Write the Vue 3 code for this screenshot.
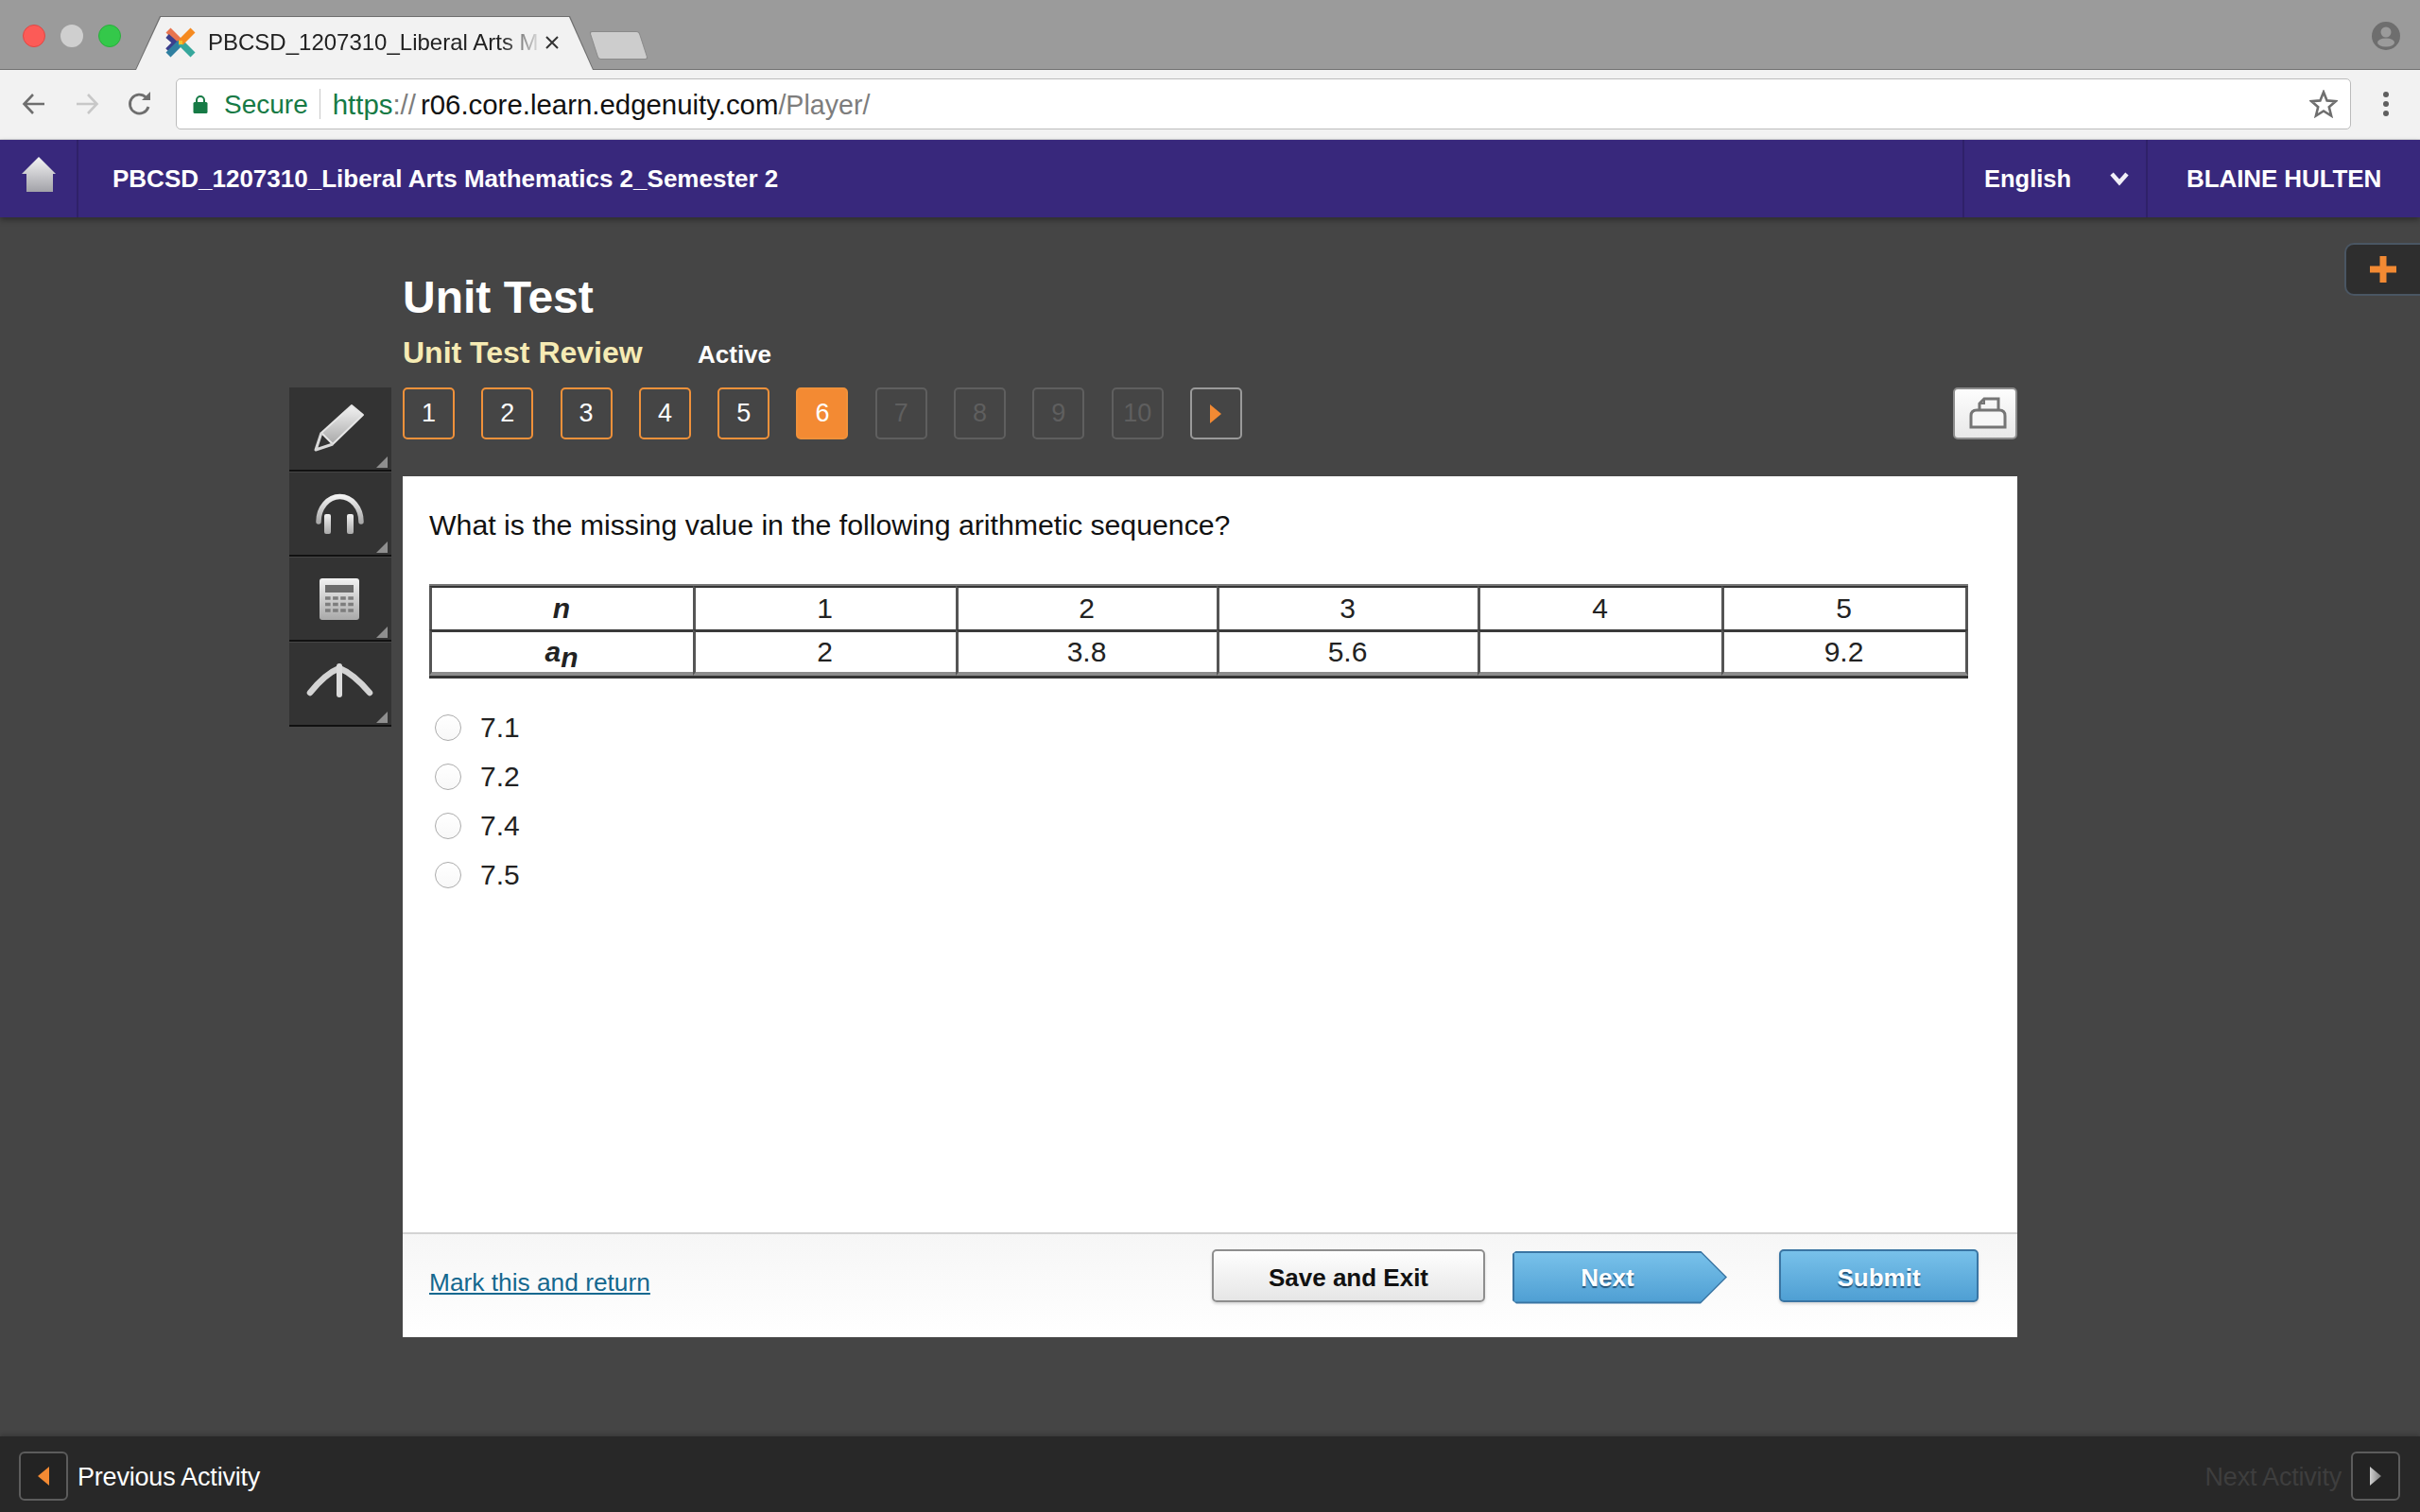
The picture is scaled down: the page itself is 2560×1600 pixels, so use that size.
<script setup>
const pages = [
  { n: '1', s: 'done' }, { n: '2', s: 'done' }, { n: '3', s: 'done' }, { n: '4', s: 'done' }, { n: '5', s: 'done' },
  { n: '6', s: 'current' }, { n: '7', s: 'locked' }, { n: '8', s: 'locked' }, { n: '9', s: 'locked' }, { n: '10', s: 'locked' }
]
const headRow = ['1', '2', '3', '4', '5']
const valueRow = ['2', '3.8', '5.6', '', '9.2']
const options = ['7.1', '7.2', '7.4', '7.5']
</script>

<template>
  <div class="page">
    <div class="tabstrip">
      <div class="lights">
        <span class="light red"></span><span class="light grey"></span><span class="light green"></span>
      </div>
      <div class="tab">
        <svg class="favicon" viewBox="0 0 32 32" width="32" height="32">
          <path d="M3 3 L16 16" stroke="#e8744e" stroke-width="7" fill="none" />
          <path d="M2 9 L10 16 L2 24" stroke="#3b3f8c" stroke-width="5" fill="none" />
          <path d="M3 29 L16 16" stroke="#2f7fa0" stroke-width="7" fill="none" />
          <path d="M29 29 L16 16" stroke="#36a79c" stroke-width="7" fill="none" />
          <path d="M29 3 L16 16" stroke="#f58a20" stroke-width="7" fill="none" />
          <path d="M14 14 L18 14 L18 18 L14 18 Z" fill="#f3c02b" />
        </svg>
        <span class="tab-title">PBCSD_1207310_Liberal Arts M</span>
        <svg class="tab-close" viewBox="0 0 14 14" width="14" height="14">
          <path d="M1 1 L13 13 M13 1 L1 13" stroke="#333" stroke-width="2" />
        </svg>
      </div>
      <div class="newtab"></div>
      <svg class="profile" viewBox="0 0 30 30" width="30" height="30">
        <circle cx="15" cy="15" r="15" fill="#6e6e6e" />
        <circle cx="15" cy="11" r="5.5" fill="#9b9b9b" />
        <ellipse cx="15" cy="22" rx="9" ry="4.5" fill="#9b9b9b" />
      </svg>
    </div>

    <div class="toolbar">
      <svg class="tb-icon" viewBox="0 0 28 28" width="28" height="28">
        <path d="M25 14 H4 M13 4 L3.5 14 L13 24" stroke="#6e6e6e" stroke-width="2.6" fill="none" />
      </svg>
      <svg class="tb-icon" viewBox="0 0 28 28" width="28" height="28">
        <path d="M3 14 H24 M15 4 L24.5 14 L15 24" stroke="#c8c8c8" stroke-width="2.6" fill="none" />
      </svg>
      <svg class="tb-icon" viewBox="0 0 28 28" width="28" height="28">
        <path d="M23 17 A10 10 0 1 1 20.5 7" stroke="#6e6e6e" stroke-width="2.8" fill="none" />
        <path d="M16 10 H25 V1 Z" fill="#6e6e6e" />
      </svg>
      <div class="omnibox">
        <svg class="lock" viewBox="0 0 16 20" width="16" height="20">
          <path d="M4 9 V6 A4 4 0 0 1 12 6 V9" stroke="#167a45" stroke-width="2" fill="none" />
          <rect x="0.5" y="8" width="15" height="12" rx="1.5" fill="#167a45" />
        </svg>
        <span class="secure">Secure</span>
        <span class="omni-sep"></span>
        <span class="url"><span class="u-green">https</span><span class="u-grey">://</span><span class="u-dark">r06.core.learn.edgenuity.com</span><span class="u-grey u-path">/Player/</span></span>
        <svg class="star" viewBox="0 0 30 30" width="30" height="30">
          <path d="M15 2.5 L18.6 11.4 L28 12.1 L20.8 18.2 L23.1 27.5 L15 22.5 L6.9 27.5 L9.2 18.2 L2 12.1 L11.4 11.4 Z" stroke="#6e6e6e" stroke-width="2.6" fill="none" />
        </svg>
      </div>
      <div class="dots"><i></i><i></i><i></i></div>
    </div>

    <header class="nav">
      <div class="home">
        <svg viewBox="0 0 36 38" width="36" height="38">
          <defs>
            <linearGradient id="homeG" x1="0" y1="0" x2="0" y2="1">
              <stop offset="0" stop-color="#f4f4f4" /><stop offset="1" stop-color="#a2a2a8" />
            </linearGradient>
          </defs>
          <path d="M18 0 L36 18 H33 V37 H5 V18 H0 Z" fill="url(#homeG)" />
        </svg>
      </div>
      <div class="course">PBCSD_1207310_Liberal Arts Mathematics 2_Semester 2</div>
      <div class="lang">
        <span>English</span>
        <svg viewBox="0 0 20 16" width="20" height="16">
          <path d="M2 3 L10 12 L18 3" stroke="#f1eff8" stroke-width="4.5" fill="none" />
        </svg>
      </div>
      <div class="user">BLAINE HULTEN</div>
    </header>

    <main class="main">
      <div class="plus">
        <svg viewBox="0 0 30 30" width="30" height="30">
          <path d="M11.5 1 H18.5 V11.5 H29 V18.5 H18.5 V29 H11.5 V18.5 H1 V11.5 H11.5 Z" fill="#f38a33" />
        </svg>
      </div>

      <div class="heading">
        <h1>Unit Test</h1>
        <div class="sub"><h2>Unit Test Review</h2><span>Active</span></div>
      </div>

      <div class="tools">
        <button class="tool">
          <svg viewBox="0 0 108 87" width="108" height="87">
            <defs>
              <linearGradient id="toolG" x1="0" y1="0" x2="0" y2="1">
                <stop offset="0" stop-color="#f2f2f2" /><stop offset="1" stop-color="#a9a9a9" />
              </linearGradient>
            </defs>
            <path d="M66 19 L78 29 L46 60 L34 48 Z" fill="url(#toolG)" stroke="#e6e6e6" stroke-width="2" stroke-linejoin="round" />
            <path d="M34 48 L28 66 L46 60" fill="none" stroke="#d8d8d8" stroke-width="3" stroke-linejoin="round" />
            <path d="M104 85 L104 73 L92 85 Z" fill="#8f8f8f" />
          </svg>
        </button>
        <button class="tool">
          <svg viewBox="0 0 108 87" width="108" height="87">
            <path d="M31 52 A22 26 0 0 1 76 52" fill="none" stroke="url(#toolG)" stroke-width="5.5" stroke-linecap="round" />
            <rect x="37" y="44" width="7" height="21" rx="2" fill="url(#toolG)" />
            <rect x="61" y="44" width="7" height="21" rx="2" fill="url(#toolG)" />
            <path d="M104 85 L104 73 L92 85 Z" fill="#8f8f8f" />
          </svg>
        </button>
        <button class="tool">
          <svg viewBox="0 0 108 87" width="108" height="87">
            <rect x="32" y="22" width="42" height="44" rx="3" fill="url(#toolG)" />
            <rect x="38" y="29" width="30" height="8" fill="#6c6c6c" />
            <path d="M38 43 H68 M38 49.5 H68 M38 56 H68" stroke="#7d7d7d" stroke-width="3.6" stroke-dasharray="5.6 2.5" />
            <path d="M104 85 L104 73 L92 85 Z" fill="#8f8f8f" />
          </svg>
        </button>
        <button class="tool">
          <svg viewBox="0 0 108 87" width="108" height="87">
            <path d="M22 53 Q38 33 53 27 Q68 33 85 53" fill="none" stroke="#d4d4d4" stroke-width="6.5" stroke-linecap="round" stroke-linejoin="round" />
            <path d="M53 25 V55" stroke="#dcdcdc" stroke-width="6" stroke-linecap="round" />
            <path d="M104 85 L104 73 L92 85 Z" fill="#8f8f8f" />
          </svg>
        </button>
      </div>

      <div class="activity">
        <div class="pager-row">
          <nav class="pager">
            <button v-for="p in pages" :key="p.n" class="pg" :class="p.s">{{ p.n }}</button>
            <button class="pg next">
              <svg viewBox="0 0 12 20" width="12" height="20"><path d="M0 0 L12 10 L0 20 Z" fill="#f38a33" /></svg>
            </button>
          </nav>
          <button class="print">
            <svg viewBox="2 2 64 51" width="64" height="51">
              <path d="M28 25 V17 L33 12 H48 V25" fill="none" stroke="#757575" stroke-width="3" />
              <path d="M28 17 H33 V12" fill="none" stroke="#757575" stroke-width="2" />
              <path d="M19 42 H55 V30 Q55 24 49 24 H25 Q19 24 19 30 Z" fill="#f7f7f7" stroke="#757575" stroke-width="3" />
            </svg>
          </button>
        </div>

        <section class="card">
          <div class="card-body">
            <p class="question">What is the missing value in the following arithmetic sequence?</p>
            <table class="seq">
              <colgroup>
                <col class="c0" /><col class="c1" /><col class="c2" /><col class="c3" /><col class="c4" /><col class="c5" />
              </colgroup>
              <tbody>
                <tr>
                  <td class="var">n</td>
                  <td v-for="h in headRow" :key="h">{{ h }}</td>
                </tr>
                <tr>
                  <td class="var">a<sub>n</sub></td>
                  <td v-for="(v, i) in valueRow" :key="i">{{ v }}</td>
                </tr>
              </tbody>
            </table>
            <div class="options">
              <label v-for="o in options" :key="o" class="option"><span class="radio"></span>{{ o }}</label>
            </div>
          </div>
          <footer class="card-foot">
            <a class="mark">Mark this and return</a>
            <div class="actions">
              <button class="btn save">Save and Exit</button>
              <button class="btn-next"><span>Next</span></button>
              <button class="btn submit">Submit</button>
            </div>
          </footer>
        </section>
      </div>
    </main>

    <footer class="bottom">
      <button class="arrow">
        <svg viewBox="0 0 12 20" width="12" height="20"><path d="M12 0 L0 10 L12 20 Z" fill="#f38a33" /></svg>
      </button>
      <span class="prev-label">Previous Activity</span>
      <span class="next-label">Next Activity</span>
      <button class="arrow">
        <svg viewBox="0 0 12 20" width="12" height="20">
          <defs>
            <linearGradient id="nextG" x1="0" y1="0" x2="1" y2="0">
              <stop offset="0" stop-color="#d0d0d0" /><stop offset="1" stop-color="#7c7c7c" />
            </linearGradient>
          </defs>
          <path d="M0 0 L12 10 L0 20 Z" fill="url(#nextG)" />
        </svg>
      </button>
    </footer>
  </div>
</template>

<style scoped>
.page {
  width: 2560px;
  height: 1600px;
  display: flex;
  flex-direction: column;
  overflow: hidden;
  background: #454545;
  font-family: "Liberation Sans", Arial, sans-serif;
  color: #111;
}
button { font-family: inherit; padding: 0; cursor: default; }

/* Browser chrome */
.tabstrip {
  height: 74px;
  flex: none;
  box-sizing: border-box;
  display: flex;
  background: #9b9b9b;
  border-bottom: 1px solid #717171;
  position: relative;
}
.lights { display: flex; gap: 16px; margin: 26px 0 0 24px; height: 24px; }
.light { width: 24px; height: 24px; border-radius: 50%; box-sizing: border-box; }
.red { background: #fc5b57; border: 1px solid #df4744; }
.grey { background: #cfcfcf; }
.green { background: #34c84a; border: 1px solid #2aae3c; }
.tab {
  width: 485px;
  height: 57px;
  margin: 17px 0 0 15px;
  position: relative;
  display: flex;
  align-items: center;
  box-sizing: border-box;
  padding: 0 36px 2px 32px;
  background: #6f6f6f;
  clip-path: polygon(26px 0, 460px 0, 485px 100%, 0 100%);
}
.tab::before {
  content: "";
  position: absolute;
  inset: 1px 1px 0 1px;
  background: #f2f2f2;
  clip-path: polygon(26px 0, 458px 0, 483px 100%, 0 100%);
}
.favicon { position: relative; flex: none; }
.tab-title {
  position: relative;
  width: 354px;
  margin-left: 13px;
  font-size: 24px;
  white-space: nowrap;
  color: #222;
  -webkit-mask-image: linear-gradient(90deg, #000 88%, transparent 100%);
  mask-image: linear-gradient(90deg, #000 88%, transparent 100%);
}
.tab-close { position: relative; flex: none; margin-left: 3px; }
.newtab {
  width: 53px;
  height: 30px;
  margin: 33px 0 0 0;
  background: #cdcdcd;
  border: 1px solid #8a8a8a;
  box-sizing: border-box;
  border-radius: 3px;
  transform: skewX(18deg);
}
.profile { margin: 23px 21px 0 auto; }

.toolbar {
  height: 74px;
  flex: none;
  box-sizing: border-box;
  background: #f2f2f2;
  border-bottom: 1px solid #d5d5d5;
  display: flex;
  align-items: center;
  padding: 0 0 1px 22px;
}
.tb-icon { flex: none; margin-right: 28px; }
.tb-icon:nth-of-type(3) { margin-right: 24px; }
.omnibox {
  width: 2301px;
  height: 54px;
  box-sizing: border-box;
  background: #fff;
  border: 1px solid #bcbcbc;
  border-radius: 5px;
  display: flex;
  align-items: center;
  padding: 0 13px 0 17px;
  font-size: 28px;
  flex: none;
}
.lock { flex: none; }
.secure { color: #167a45; margin-left: 17px; padding-top: 2px; }
.omni-sep { width: 1px; height: 32px; background: #c9c9c9; margin: 0 13px 0 12px; }
.url { white-space: nowrap; font-size: 29.4px; padding-top: 2px; }
.u-green { color: #167a45; }
.u-grey { color: #7d7d7d; }
.u-path { font-size: 28.6px; }
.u-dark { color: #111; margin-left: 5px; }
.star { margin-left: auto; }
.dots { display: flex; flex-direction: column; gap: 4px; margin-left: 34px; }
.dots i { width: 6px; height: 6px; border-radius: 50%; background: #5f5f5f; }

/* Course nav */
.nav {
  height: 82px;
  flex: none;
  background: #38287c;
  color: #fff;
  font-weight: bold;
  font-size: 26px;
  display: flex;
  align-items: center;
  position: relative;
  z-index: 2;
  box-shadow: 0 3px 6px rgba(0, 0, 0, 0.35);
}
.home {
  width: 83px;
  height: 100%;
  box-sizing: border-box;
  border-right: 2px solid #2f2169;
  display: flex;
  align-items: center;
  justify-content: center;
  padding-bottom: 8px;
}
.course { margin-left: 36px; flex: 1; }
.lang {
  width: 196px;
  height: 100%;
  box-sizing: border-box;
  border-left: 2px solid #2f2169;
  border-right: 2px solid #2f2169;
  display: flex;
  align-items: center;
  justify-content: space-between;
  padding: 0 18px 0 21px;
  font-size: 25.5px;
}
.user { width: 288px; box-sizing: border-box; padding-left: 41px; letter-spacing: -0.1px; }

/* Main */
.main {
  flex: 1;
  position: relative;
  display: grid;
  grid-template-columns: 108px 1708px;
  column-gap: 12px;
  grid-template-rows: 180px auto;
  padding-left: 306px;
}
.plus {
  position: absolute;
  right: 0;
  top: 27px;
  width: 80px;
  height: 56px;
  box-sizing: border-box;
  background: #2e2e2e;
  border: 2px solid #4a5663;
  border-right: 0;
  border-radius: 10px 0 0 10px;
  display: flex;
  align-items: center;
  justify-content: center;
}
.heading { grid-column: 2; grid-row: 1; color: #fff; padding-top: 57px; }
h1 { margin: 0; font-size: 48px; line-height: 56px; }
.sub { display: flex; align-items: baseline; margin-top: 11px; }
h2 { margin: 0; font-size: 32px; line-height: 38px; color: #f6ebb4; width: 312px; }
.sub span { font-size: 26px; font-weight: bold; }

.tools { grid-column: 1; grid-row: 2; display: flex; flex-direction: column; gap: 1px; align-self: start; }
.tool {
  width: 108px;
  height: 89px;
  background: #333;
  border: 0;
  border-bottom: 2px solid #111;
  display: block;
}
.tool svg { display: block; }

.activity { grid-column: 2; grid-row: 2; }
.pager-row { display: flex; justify-content: space-between; height: 55px; }
.pager { display: flex; gap: 28.3px; }
.pg {
  width: 55px;
  height: 55px;
  box-sizing: border-box;
  border-radius: 5px;
  background: transparent;
  border: 2px solid #f0913a;
  color: #fff;
  font-size: 27px;
  display: flex;
  align-items: center;
  justify-content: center;
}
.pg.current { background: #f38a33; }
.pg.locked { border-color: #5f5f5f; color: #5f5f5f; }
.pg.next { border-color: #9a9a9a; }
.print {
  width: 68px;
  height: 55px;
  box-sizing: border-box;
  border: 2px solid #8c8c8c;
  border-radius: 5px;
  background: linear-gradient(#fdfdfd, #e8e8e8);
  display: flex;
  align-items: center;
  justify-content: center;
}

.card {
  margin-top: 39px;
  height: 911px;
  background: #fff;
  display: flex;
  flex-direction: column;
}
.card-body { flex: 1; padding: 0 28px; }
.question { margin: 31px 0 0; font-size: 30.25px; line-height: 42px; color: #111; }
.seq {
  margin-top: 41px;
  width: 1628px;
  table-layout: fixed;
  border-collapse: separate;
  border-spacing: 0;
  border-top: 2px solid #777;
  border-bottom: 3px solid #333;
  font-size: 30px;
  color: #222;
  text-align: center;
}
.c0 { width: 279px; }
.c1 { width: 278px; }
.c2, .c3 { width: 276px; }
.c4 { width: 258px; }
.c5 { width: 261px; }
.seq td {
  height: 46px;
  box-sizing: border-box;
  padding: 0 2px 0 0;
  border-top: 2px solid #333;
  border-left: 3px solid #555;
  line-height: 42px;
}
.seq td:last-child { border-right: 3px solid #555; }
.seq tr + tr td { border-top: 3px solid #3a3a3a; border-bottom: 4px solid #8c8c8c; height: 49px; line-height: 38px; }
.var { font-weight: bold; font-style: italic; }
sub { font-size: 30px; line-height: 0; vertical-align: -6px; }
.options { margin-top: 26px; display: flex; flex-direction: column; }
.option {
  height: 52px;
  display: flex;
  align-items: center;
  font-size: 30px;
  color: #222;
}
.radio {
  width: 28px;
  height: 28px;
  box-sizing: border-box;
  border-radius: 50%;
  border: 1.5px solid #ababab;
  background: linear-gradient(#fff, #f8f8f8);
  margin: 0 20px 0 6px;
  flex: none;
}

.card-foot {
  height: 111px;
  flex: none;
  box-sizing: border-box;
  border-top: 2px solid #d3d3d3;
  background: linear-gradient(#f6f6f6, #fff);
  display: flex;
  align-items: center;
  padding: 0 41px 0 28px;
}
.mark { font-size: 26.3px; color: #15688f; text-decoration: underline; margin-bottom: 7px; }
.actions { margin-left: auto; display: flex; align-items: flex-start; padding-bottom: 20px; }
.btn {
  height: 56px;
  box-sizing: border-box;
  border-radius: 5px;
  font-size: 26px;
  font-weight: bold;
  padding-top: 5px;
}
.save {
  width: 289px;
  background: linear-gradient(#fefefe, #e6e6e6);
  border: 2px solid #8e8e8e;
  color: #111;
  box-shadow: 0 2px 3px rgba(0, 0, 0, 0.15);
}
.submit {
  width: 211px;
  margin-left: 55px;
  background: linear-gradient(#78c1ea, #4f9fd3);
  border: 2px solid #3a75a3;
  color: #fff;
  text-shadow: 0 2px 1px #24557a;
  box-shadow: 0 2px 3px rgba(0, 0, 0, 0.15);
}
.btn-next {
  width: 227px;
  height: 56px;
  margin: 2px 0 0 29px;
  border: 0;
  position: relative;
  background: #3a75a3;
  clip-path: polygon(4px 0, 199px 0, 227px 50%, 199px 100%, 4px 100%, 0 94%, 0 6%);
  color: #fff;
  font-size: 26px;
  font-weight: bold;
}
.btn-next::before {
  content: "";
  position: absolute;
  inset: 2px;
  background: linear-gradient(#78c1ea, #4f9fd3);
  clip-path: polygon(0 0, 197px 0, 223px 50%, 197px 100%, 0 100%);
}
.btn-next span { position: relative; display: block; width: 201px; padding-top: 2px; text-shadow: 0 2px 1px #24557a; }

/* Bottom bar */
.bottom {
  height: 80px;
  flex: none;
  box-sizing: border-box;
  background: #282828;
  box-shadow: 0 -2px 5px rgba(0, 0, 0, 0.2);
  display: flex;
  align-items: center;
  padding: 3px 21px 0 20px;
  font-size: 27px;
  position: relative;
}
.arrow {
  width: 52px;
  height: 52px;
  box-sizing: border-box;
  background: #232323;
  border: 2px solid #5c5c5c;
  border-radius: 6px;
  display: flex;
  align-items: center;
  justify-content: center;
}
.prev-label { color: #fff; margin-left: 10px; letter-spacing: -0.2px; padding-top: 3px; }
.next-label { color: #3e3e3e; margin: 0 10px 0 auto; letter-spacing: -0.2px; padding-top: 3px; }
</style>
